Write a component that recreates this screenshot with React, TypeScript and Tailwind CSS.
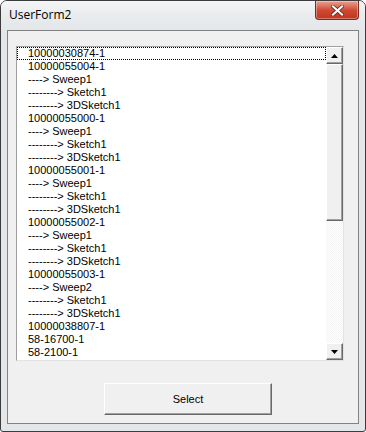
import React from 'react';

const ITEMS = [
  '10000030874-1',
  '10000055004-1',
  '----> Sweep1',
  '--------> Sketch1',
  '--------> 3DSketch1',
  '10000055000-1',
  '----> Sweep1',
  '--------> Sketch1',
  '--------> 3DSketch1',
  '10000055001-1',
  '----> Sweep1',
  '--------> Sketch1',
  '--------> 3DSketch1',
  '10000055002-1',
  '----> Sweep1',
  '--------> Sketch1',
  '--------> 3DSketch1',
  '10000055003-1',
  '----> Sweep2',
  '--------> Sketch1',
  '--------> 3DSketch1',
  '10000038807-1',
  '58-16700-1',
  '58-2100-1',
];

const Arrow = ({ up }: { up?: boolean }) => (
  <svg width="7" height="4" viewBox="0 0 7 4">
    {up ? <path d="M3.5 0 L7 4 L0 4 Z" fill="#000" /> : <path d="M0 0 L7 0 L3.5 4 Z" fill="#000" />}
  </svg>
);

const ScrollButton = ({ up }: { up?: boolean }) => (
  <div className="w-[17px] h-[17px] flex items-center justify-center bg-[#f0f0f0] border border-t-white border-l-white border-r-[#696969] border-b-[#696969] shadow-[inset_-1px_-1px_0_#a0a0a0]">
    <Arrow up={up} />
  </div>
);

export default function App() {
  return (
    <div className="w-[366px] h-[432px] flex flex-col bg-[#e4e7ea] border border-[#3c3c3c] rounded-t-[7px] rounded-b-[3px] font-['Liberation_Sans',sans-serif] overflow-hidden">
      {/* title bar */}
      <div className="h-[29px] flex items-start justify-between bg-gradient-to-b from-[#f4f5f6] via-[#e9ebed] to-[#e4e7ea]">
        <span className="pl-[8px] pt-[5px] text-[12px] text-black font-['Open_Sans',sans-serif]">UserForm2</span>
        <div className="mr-[6px] w-[44px] h-[19px] flex items-center justify-center rounded-b-[4px] border border-t-0 border-[#7a2a1e] bg-gradient-to-b from-[#e8a193] via-[#cf4b33] to-[#c0341d] shadow-[inset_0_0_0_1px_rgba(255,255,255,0.35)]">
          <svg width="13" height="11" viewBox="0 0 13 11">
            <path d="M2 1.5 L11 9.5 M11 1.5 L2 9.5" stroke="#5a2018" strokeWidth="3.6" strokeLinecap="square" />
            <path d="M2 1.5 L11 9.5 M11 1.5 L2 9.5" stroke="#fff" strokeWidth="2.2" strokeLinecap="square" />
          </svg>
        </div>
      </div>

      {/* client area */}
      <div className="mx-[6px] mb-[7px] flex-1 flex flex-col bg-[#f0f0f0] border border-[#838383]">
        <div className="mt-[15px] ml-[8px] w-[328px] h-[315px] flex bg-white border border-t-[#a0a0a0] border-l-[#a0a0a0] border-r-[#e3e3e3] border-b-[#e3e3e3]">
          <div className="flex-1 flex flex-col text-[11px] text-black leading-[13px]">
            {ITEMS.map((item, i) => (
              <div
                key={i}
                className={`h-[13px] pl-[11px] whitespace-pre ${i === 0 ? 'outline outline-1 outline-dotted outline-black -outline-offset-1' : ''}`}
              >
                {item}
              </div>
            ))}
          </div>
          <div className="w-[17px] flex flex-col bg-[repeating-conic-gradient(#f4f4f4_0_25%,#ffffff_0_50%)] bg-[length:2px_2px]">
            <ScrollButton up />
            <div className="h-[157px] bg-[#f0f0f0] border border-t-white border-l-white border-r-[#696969] border-b-[#696969] shadow-[inset_-1px_-1px_0_#a0a0a0]" />
            <div className="flex-1" />
            <ScrollButton />
          </div>
        </div>

        <button className="mt-[22px] ml-[96px] w-[168px] h-[32px] bg-[#f0f0f0] text-[11px] text-black border border-t-white border-l-white border-r-[#696969] border-b-[#696969] shadow-[inset_-1px_-1px_0_#a0a0a0]">
          Select
        </button>
      </div>
    </div>
  );
}
